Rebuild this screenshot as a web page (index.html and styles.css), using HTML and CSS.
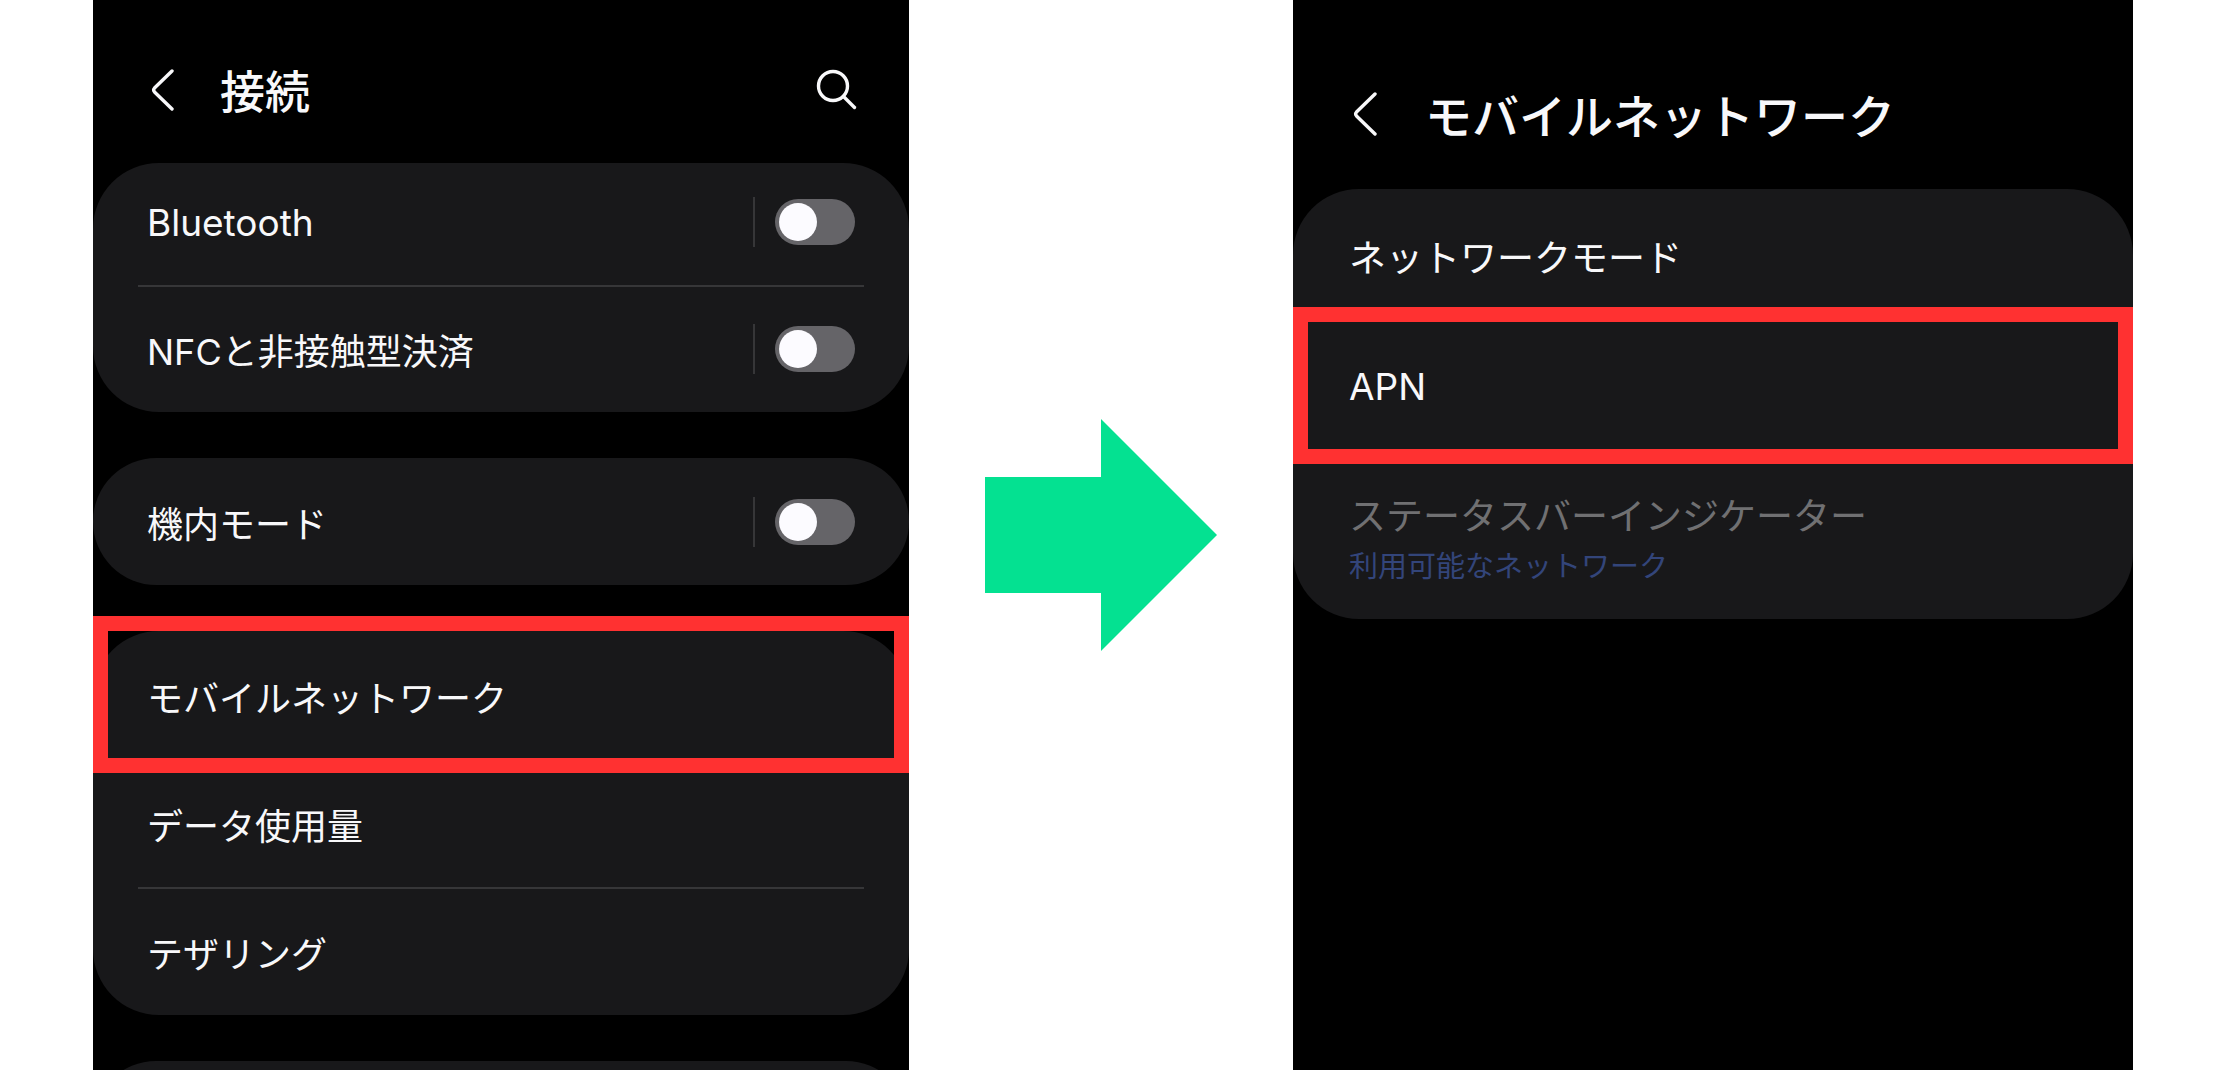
FILE: index.html
```html
<!DOCTYPE html>
<html lang="ja">
<head>
<meta charset="utf-8">
<meta name="viewport" content="width=device-width, initial-scale=1">
<title>APN設定の手順</title>
<link rel="stylesheet" href="styles.css">
</head>
<body>
<main class="steps">
  <section class="phone phone-connections">
    <header class="bar">
      <button class="icon-button" type="button" aria-label="戻る">
        <svg width="24" height="44" viewBox="0 0 24 44" fill="none" stroke="currentColor" stroke-width="3.400" stroke-linecap="round" stroke-linejoin="round"><path d="M21 3 3.500 20Q1.800 22 3.500 24L21 41"/></svg>
      </button>
      <h1 class="title">接続</h1>
      <button class="icon-button search" type="button" aria-label="検索">
        <svg width="42" height="42" viewBox="0 0 42 42" fill="none" stroke="currentColor" stroke-width="3.400" stroke-linecap="round"><circle cx="18" cy="17" r="14.500"/><path d="M28.500 27.500 39.500 38.500"/></svg>
      </button>
    </header>
    <ul class="card">
      <li class="row row-first">
        <label class="label latin" for="bluetooth">Bluetooth</label>
        <span class="toggle"><input class="switch" type="checkbox" role="switch" id="bluetooth"></span>
      </li>
      <li class="row row-switch row-divided">
        <label class="label" for="nfc">NFCと非接触型決済</label>
        <span class="toggle"><input class="switch" type="checkbox" role="switch" id="nfc"></span>
      </li>
    </ul>
    <ul class="card">
      <li class="row row-switch">
        <label class="label" for="airplane">機内モード</label>
        <span class="toggle"><input class="switch" type="checkbox" role="switch" id="airplane"></span>
      </li>
    </ul>
    <ul class="card">
      <li class="row highlight"><a class="label" href="#mobile">モバイルネットワーク</a></li>
      <li class="row"><a class="label" href="#data">データ使用量</a></li>
      <li class="row row-divided"><a class="label" href="#tethering">テザリング</a></li>
    </ul>
    <div class="card card-next"></div>
  </section>

  <svg class="arrow" width="232" height="232" viewBox="0 0 232 232" aria-hidden="true"><path d="M0 58H116V0L232 116 116 232V174H0Z" fill="#04e191"/></svg>

  <section class="phone phone-mobile" id="mobile">
    <header class="bar">
      <button class="icon-button" type="button" aria-label="戻る">
        <svg width="24" height="44" viewBox="0 0 24 44" fill="none" stroke="currentColor" stroke-width="3.400" stroke-linecap="round" stroke-linejoin="round"><path d="M22 2 3.500 20Q1.800 22 3.500 24L22 42"/></svg>
      </button>
      <h2 class="title">モバイルネットワーク</h2>
    </header>
    <ul class="card">
      <li class="row row-mode"><a class="label" href="#mode">ネットワークモード</a></li>
      <li class="row highlight"><a class="label latin" href="#apn">APN</a></li>
      <li class="row row-status">
        <span class="label">ステータスバーインジケーター</span>
        <span class="note">利用可能なネットワーク</span>
      </li>
    </ul>
  </section>
</main>
</body>
</html>
```

FILE: styles.css
```css
* {
  box-sizing: border-box;
}

body {
  margin: 0;
  background: #fff;
  font-family: Inter, "Noto Sans CJK JP", sans-serif;
}

.steps {
  display: grid;
  grid-template-columns: 816fr 384fr 840fr;
  align-items: stretch;
  height: 100vh;
  padding: 0 4.777% 0 4.152%;
}

.arrow {
  place-self: center;
}

.phone {
  overflow: hidden;
  background: #000;
  color: #f8f8fa;
  font-size: 36px;
}

.phone-mobile {
  font-size: 37px;
}

.bar {
  display: flex;
  align-items: center;
  height: 163px;
  padding: 17px 52px 0 58px;
}

.phone-mobile .bar {
  height: 189px;
  padding: 39px 52px 0 60px;
}

.icon-button {
  display: flex;
  padding: 0;
  border: 0;
  background: none;
  color: inherit;
}

.search {
  margin-left: auto;
}

.title {
  margin: 0 0 0 45px;
  padding-top: 6px;
  font-size: 45px;
  font-weight: 500;
  line-height: 60px;
}

.phone-mobile .title {
  margin-left: 48px;
  font-size: 47px;
}

.card {
  margin: 0 0 46px;
  padding: 0;
  border-radius: 66px;
  background: #18181a;
  list-style: none;
}

.card-next {
  height: 126px;
}

.row {
  position: relative;
  display: flex;
  align-items: center;
  justify-content: space-between;
  height: 128px;
  padding: 0 54px;
}

.row-first {
  height: 122px;
  padding-bottom: 4px;
}

.row-switch {
  height: 127px;
}

.row-divided::before {
  content: "";
  position: absolute;
  inset: 0 45px auto;
  height: 2px;
  background: #363638;
}

.row-mode {
  height: 133px;
}

.row-status {
  flex-direction: column;
  align-items: flex-start;
  justify-content: center;
  height: 169px;
  color: #707072;
}

.phone-mobile .row {
  padding-left: 56px;
}

/* Red frame around the entry to tap */
.highlight::after {
  content: "";
  position: absolute;
  inset: -15px 0 -14px;
  border: 15px solid #ff3131;
  pointer-events: none;
}

.label {
  padding-top: 7px;
  color: inherit;
  line-height: 54px;
  text-decoration: none;
}

.latin {
  padding-top: 2px;
  font-size: 37px;
}

.row-status .label {
  padding-top: 10px;
}

.note {
  color: #33457a;
  font-size: 29px;
  line-height: 46px;
}

.toggle {
  display: flex;
  align-items: center;
  height: 50px;
  padding-left: 20px;
  border-left: 2px solid #363638;
}

.switch {
  appearance: none;
  width: 80px;
  height: 46px;
  margin: 0;
  padding: 4px;
  border-radius: 23px;
  background: #656468;
}

.switch::before {
  content: "";
  display: block;
  width: 38px;
  height: 38px;
  border-radius: 50%;
  background: #fcfbff;
}

.switch:checked::before {
  margin-left: auto;
}
```
